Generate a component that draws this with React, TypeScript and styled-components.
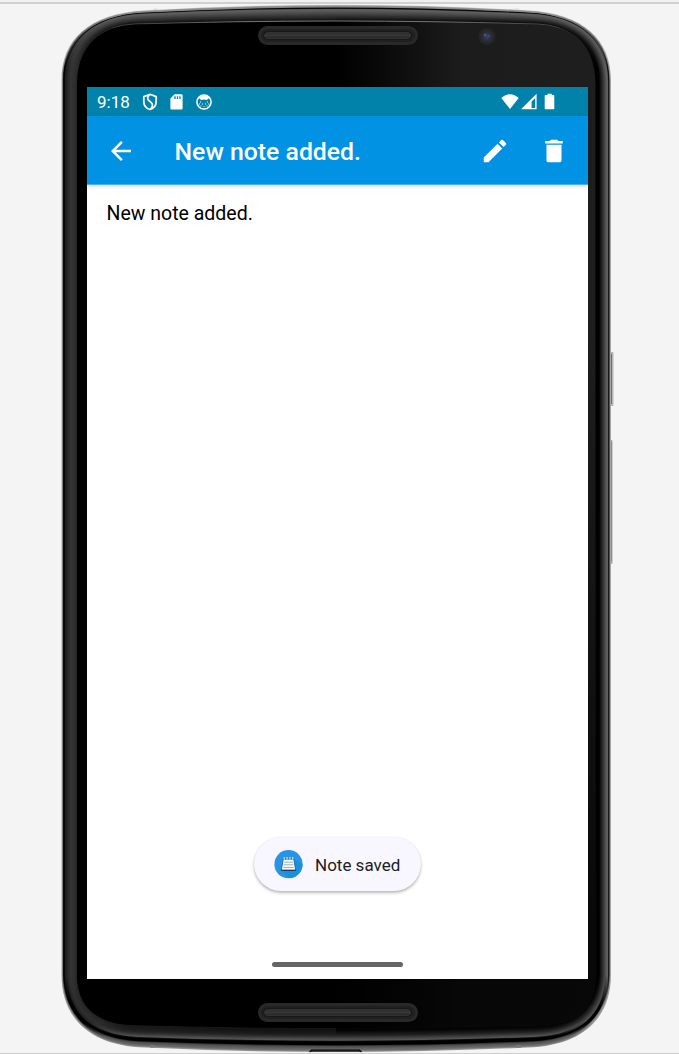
import React from "react";
import styled, { createGlobalStyle } from "styled-components";

const GlobalStyle = createGlobalStyle`
  *, *::before, *::after { box-sizing: border-box; }
  body { margin: 0; font-family: Roboto, "Liberation Sans", sans-serif; }
`;

const Page = styled.main`
  display: grid;
  grid-template: 1054px / 679px;
  overflow: hidden;
`;

const Backdrop = styled.div`
  grid-area: 1 / 1;
  background: #f4f4f4;
  border-bottom: 1px solid #cfcfcf;
`;

const TopRule = styled.div`
  height: 4px;
  background: linear-gradient(#f1f1f1 2px, #d0d0d0 2px);
`;

const FrameArt = styled.svg`
  grid-area: 1 / 1;
  display: block;
`;

const Screen = styled.section`
  grid-area: 1 / 1;
  display: flex;
  flex-direction: column;
  width: 501px;
  height: 892px;
  margin: 87px 0 0 87px;
  background: #fff;
  z-index: 1;
`;

const StatusBar = styled.div`
  display: flex;
  justify-content: space-between;
  height: 29px;
  padding: 0 33px 0 10px;
  background: #0082ab;
  color: #fff;
`;

const StatusGroup = styled.div<{ $gap: number }>`
  display: flex;
  align-items: center;
  gap: ${(p) => p.$gap}px;
`;

const Clock = styled.span`
  width: 32px;
  font-size: 17px;
  line-height: 29px;
  padding-top: 1px;
  white-space: nowrap;
`;

const AppBar = styled.header`
  display: flex;
  align-items: center;
  height: 69px;
  padding: 1px 19px 0 19px;
  background: #0292e3;
  border-bottom: 1px solid #4fb0e6;
  color: #fff;
  box-shadow: 0 1px 4px rgba(0, 0, 0, 0.18);
`;

const Title = styled.h1`
  flex: 1;
  margin: 2px 0 0 38.5px;
  font-size: 24.8px;
  font-weight: 500;
  line-height: 32px;
  white-space: nowrap;
`;

const IconButton = styled.button<{ $end?: number }>`
  display: flex;
  padding: 0;
  margin: 0 ${(p) => p.$end ?? 0}px 0 0;
  border: 0;
  background: none;
  color: inherit;
  svg { display: block; width: 30px; height: 30px; fill: currentColor; }
`;

const NoteBody = styled.p`
  flex: 1;
  margin: 0;
  padding: 16px 19.5px;
  color: #000;
  font-size: 19.5px;
  line-height: 26px;
`;

const Toast = styled.div`
  display: flex;
  align-items: center;
  align-self: center;
  gap: 12px;
  width: 167px;
  height: 54px;
  padding-left: 20px;
  margin-bottom: 71px;
  border-radius: 27px;
  background: #f8f7ff;
  color: #1b1b22;
  font-size: 17px;
  white-space: nowrap;
  box-shadow: 0 2px 3px rgba(0, 0, 0, 0.26), 0 0 2px rgba(0, 0, 0, 0.08);
`;

const ToastText = styled.span`
  padding-top: 2px;
`;

const GestureBar = styled.div`
  align-self: center;
  width: 131px;
  height: 5px;
  margin-bottom: 12px;
  border-radius: 3px;
  background: #666;
`;

type Rgb = [number, number, number];
type Stop = [number, number];

const shade = (stops: Stop[], t: number): string => {
  let v = stops[stops.length - 1][1];
  for (let i = 1; i < stops.length; i++) {
    if (t <= stops[i][0]) {
      const [a, x] = stops[i - 1];
      const [b, y] = stops[i];
      v = x + ((y - x) * (t - a)) / (b - a || 1);
      break;
    }
  }
  const c: Rgb = [v, v, v];
  return `rgb(${c.map((n) => Math.round(n)).join(",")})`;
};

const LEFT: Stop[] = [[0, 165], [0.07, 120], [0.1, 0], [0.17, 0], [0.22, 28], [0.55, 52], [0.85, 46], [1, 34]];
const RIGHT: Stop[] = [[0, 175], [0.08, 130], [0.1, 0], [0.14, 5], [0.2, 105], [0.35, 78], [0.65, 22], [0.75, 0], [1, 0]];
const TOP: Stop[] = [[0, 235], [0.05, 150], [0.16, 130], [0.19, 0], [0.23, 5], [0.26, 100], [0.5, 75], [0.75, 42], [0.95, 12], [1, 95]];
const BOTTOM: Stop[] = [[0, 150], [0.06, 110], [0.24, 70], [0.27, 0], [0.43, 0], [0.47, 88], [0.7, 30], [0.9, 0], [1, 0]];
const LOWER_LEFT: Stop[] = [[0, 165], [0.1, 100], [0.15, 0], [0.36, 0], [0.4, 32], [0.6, 46], [0.85, 40], [1, 30]];
const LOWER_RIGHT: Stop[] = [[0, 165], [0.14, 120], [0.17, 0], [0.34, 0], [0.38, 82], [0.6, 48], [0.85, 8], [1, 4]];

const outline = (t: number): string => {
  const m = (a: number, b: number) => (a + (b - a) * t).toFixed(2);
  const r = (a: number, b: number) => (672.5 - (a + (b - a) * t)).toFixed(2);
  return [
    `M${m(61.5, 77)} ${m(80, 85)}`,
    `C${m(61.5, 77)} ${m(40, 45)} ${m(88, 100)} ${m(13, 26)} ${m(145, 135)} ${m(10, 24)}`,
    `Q${m(240, 240)} ${m(4.5, 21)} 336.25 ${m(4.5, 21)}`,
    `Q${r(240, 240)} ${m(4.5, 21)} ${r(145, 135)} ${m(10, 24)}`,
    `C${r(88, 100)} ${m(13, 26)} ${r(61.5, 77)} ${m(40, 45)} ${r(61.5, 77)} ${m(80, 85)}`,
    `V${m(975, 975)}`,
    `C${r(61.5, 77)} ${m(1018, 1005)} ${r(90, 95)} ${m(1046, 1023)} ${r(145, 130)} ${m(1047.5, 1025)}`,
    `Q${r(240, 240)} ${m(1052, 1028)} 336.25 ${m(1052, 1028)}`,
    `Q${m(240, 240)} ${m(1052, 1028)} ${m(145, 130)} ${m(1047.5, 1025)}`,
    `C${m(90, 95)} ${m(1046, 1023)} ${m(61.5, 77)} ${m(1018, 1005)} ${m(61.5, 77)} ${m(975, 975)}Z`,
  ].join("");
};

const RINGS = Array.from({ length: 33 }, (_, i) => i / 32);

const Speaker = ({ y }: { y: number }) => (
  <g>
    <rect x="258" y={y} width="160" height="19" rx="9.5" fill="#292929" />
    <rect x="261" y={y + 3} width="154" height="13" rx="6.5" fill="#202020" />
    <rect x="263.5" y={y + 5.5} width="148" height="8" rx="4" fill="#111" />
    <rect x="264.5" y={y + 6.5} width="146" height="6" rx="3" fill="url(#speaker)" stroke="#383838" strokeWidth="0.8" />
  </g>
);

const PhoneFrame = () => (
  <FrameArt width="679" height="1054" viewBox="0 0 679 1054" aria-hidden="true">
    <defs>
      {RINGS.map((t, i) =>
        [
          [LEFT, LOWER_LEFT],
          [RIGHT, LOWER_RIGHT],
        ].map(([side, lower], s) => (
          <linearGradient key={`${i}-${s}`} id={`ring${i}-${s}`} gradientUnits="userSpaceOnUse" x1="0" x2="0" y1="0" y2="1054">
            <stop offset="0.014" stopColor={shade(TOP, t)} />
            <stop offset="0.065" stopColor={shade(side, t)} />
            <stop offset="0.925" stopColor={shade(side, t)} />
            <stop offset="0.955" stopColor={shade(lower, t)} />
            <stop offset="0.97" stopColor={shade(lower, t)} />
            <stop offset="0.984" stopColor={shade(BOTTOM, t)} />
          </linearGradient>
        ))
      )}
      <clipPath id="half0"><rect width="336" height="1054" /></clipPath>
      <clipPath id="half1"><rect x="336" width="343" height="1054" /></clipPath>
      <linearGradient id="glass" gradientUnits="userSpaceOnUse" x1="77" x2="596" y1="0" y2="0">
        <stop offset="0.5" stopColor="#000" />
        <stop offset="0.62" stopColor="#0d0d0d" />
        <stop offset="0.74" stopColor="#1c1c1c" />
        <stop offset="1" stopColor="#1e1e1e" />
      </linearGradient>
      <linearGradient id="glassFade" x1="0" x2="0" y1="0" y2="1">
        <stop offset="0.3" stopColor="#000" stopOpacity="0" />
        <stop offset="0.92" stopColor="#000" stopOpacity="0.75" />
      </linearGradient>
      <linearGradient id="speaker" x1="0" x2="0" y1="0" y2="1">
        <stop stopColor="#2c2c2c" />
        <stop offset="0.5" stopColor="#363636" />
        <stop offset="1" stopColor="#242424" />
      </linearGradient>
      <linearGradient id="rim" gradientUnits="userSpaceOnUse" x1="110" x2="562" y1="0" y2="0">
        <stop stopColor="#777" stopOpacity="0.3" />
        <stop offset="0.3" stopColor="#888" />
        <stop offset="0.7" stopColor="#888" />
        <stop offset="1" stopColor="#777" stopOpacity="0.3" />
      </linearGradient>
      <radialGradient id="lens">
        <stop stopColor="#3d4466" />
        <stop offset="0.4" stopColor="#2d3149" />
        <stop offset="0.7" stopColor="#28282b" />
        <stop offset="1" stopColor="#232323" />
      </radialGradient>
    </defs>
    <rect x="610" y="352" width="3.5" height="54" rx="1" fill="#b5b5b5" />
    <rect x="610" y="354" width="2" height="50" fill="#716d6c" />
    <rect x="610" y="440" width="2.5" height="124" rx="1" fill="#aaa6a4" />
    <rect x="610" y="442" width="1.5" height="119" fill="#77716e" />
    {[0, 1].map((s) => (
      <g key={s} clipPath={`url(#half${s})`}>
        {RINGS.map((t, i) => (
          <path key={i} d={outline(t)} fill={`url(#ring${i}-${s})`} />
        ))}
      </g>
    ))}
    <path d={outline(1)} fill="url(#glass)" />
    <path d={outline(1)} fill="url(#glassFade)" />
    <path d="M112 28Q122 24.5 135 24Q240 21 336 21T537.5 24Q550 24.5 560 28" fill="none" stroke="url(#rim)" strokeWidth="0.8" />
    <path d="M153 9.3h5M514 9.3h5" stroke="#ddd" strokeWidth="1.6" />
    <path d="M150 1046.3h5M516 1046.3h5" stroke="#777" strokeWidth="2.4" />
    <path d="M309.5 1052l2-1.8h48l2 1.8" fill="#444" stroke="#080808" strokeWidth="1.2" />
    <Speaker y={26} />
    <Speaker y={1003} />
    <circle cx="487" cy="36.5" r="8.5" fill="url(#lens)" />
    <circle cx="485" cy="34.8" r="1.1" fill="#56618a" />
    <circle cx="489" cy="36" r="0.8" fill="#4b5682" />
  </FrameArt>
);

const ShieldIcon = () => (
  <svg width="16" height="18" viewBox="0 0 16 18" fill="none" stroke="#fff" strokeWidth="1.7">
    <path d="M8 1.3L14.2 3.6V8.4C14.2 12.2 11.6 15.3 8 16.5C4.4 15.3 1.8 12.2 1.8 8.4V3.6Z" />
    <path d="M8 1.5C5.2 3.3 4.8 5.7 7.2 7.8L9.3 9.7C11.2 11.6 10.8 14.2 8.2 16.2" />
  </svg>
);

const SdIcon = () => (
  <svg width="13" height="16" viewBox="0 0 13 16">
    <path d="M4.5 .3H11.4Q12.6.3 12.6 1.4V14.5Q12.6 15.6 11.4 15.6H1.5Q.4 15.6.4 14.5V4.6Z" fill="#fff" />
    <path d="M5 2.2V5M7.5 2.2V5M10 2.2V5" stroke="#0082ab" strokeWidth="1.3" />
  </svg>
);

const FaceIcon = () => (
  <svg width="16" height="16" viewBox="0 0 16 16">
    <circle cx="8" cy="8" r="7.1" fill="none" stroke="#fff" strokeWidth="1.5" />
    <path d="M1.2 7Q2 1 8 1T14.8 7L12.9 4.2L10.8 6Q8 5.2 5.2 6L3.1 4.2Z" fill="#fff" />
    <path d="M4 8h1M11 8h1M6 10h1M9.2 10h1M4.5 12h1M10.5 12h1M7.6 12.6h1M3 10h1M12.2 10h1" stroke="#fff" strokeWidth="1" />
  </svg>
);

const SignalIcons = () => (
  <svg width="54" height="17" viewBox="0 0 54 17" fill="#fff">
    <path d="M9 16L.3 5.1Q4.1 1.3 9 1.3T17.7 5.1Z" />
    <path fillRule="evenodd" d="M20 16.2L35.6 .8V16.2ZM30.6 15H34.2V5L30.6 8.6Z" />
    <path d="M46.5.8h4.2v1.3h2q.6 0 .6.6v12.9q0 .6-.6.6h-8.4q-.6 0-.6-.6V2.7q0-.6.6-.6h2.2Z" />
  </svg>
);

const NotepadLogo = () => (
  <svg width="29" height="29" viewBox="0 0 29 29">
    <circle cx="14.5" cy="14.2" r="14.1" fill="#2994e6" />
    <path d="M7.8 20.5L15.5 28.2A14 14 0 0 0 28.5 14L20 9.5V20.5Z" fill="#1991dc" />
    <path d="M9.2 9.2H19.8L21.8 20.5H7.2Z" fill="#f7f8fa" stroke="#1c6591" strokeWidth="0.9" />
    <path d="M7.3 20.3H21.7" stroke="#123f5b" strokeWidth="1.3" />
    <path d="M10 12.2H19M9.7 14.8H19.3M9.4 17.5H19.6" stroke="#9aa9b3" strokeWidth="0.9" />
    <path d="M10.3 7V9.8M13.1 7V9.8M15.9 7V9.8M18.7 7V9.8" stroke="#a4edff" strokeWidth="1.2" />
  </svg>
);

const MaterialIcon = ({ d }: { d: string }) => (
  <svg viewBox="0 0 24 24" aria-hidden="true"><path d={d} /></svg>
);

export default function App() {
  return (
    <>
      <GlobalStyle />
      <Page>
        <Backdrop><TopRule /></Backdrop>
        <PhoneFrame />
        <Screen>
          <StatusBar>
            <StatusGroup $gap={12.5}>
              <Clock>9:18</Clock>
              <ShieldIcon />
              <SdIcon />
              <FaceIcon />
            </StatusGroup>
            <StatusGroup $gap={0}>
              <SignalIcons />
            </StatusGroup>
          </StatusBar>
          <AppBar>
            <IconButton aria-label="Back">
              <MaterialIcon d="M20 11H7.83l5.59-5.59L12 4l-8 8 8 8 1.41-1.41L7.83 13H20v-2z" />
            </IconButton>
            <Title>New note added.</Title>
            <IconButton aria-label="Edit" $end={29}>
              <MaterialIcon d="M3 17.25V21h3.75L17.81 9.94l-3.75-3.75L3 17.25zM20.71 7.04c.39-.39.39-1.02 0-1.41l-2.34-2.34a.9959.9959 0 0 0-1.41 0l-1.83 1.83 3.75 3.75 1.83-1.83z" />
            </IconButton>
            <IconButton aria-label="Delete">
              <MaterialIcon d="M6 19.6c0 .8.6 1.4 1.4 1.4h9.2c.8 0 1.4-.6 1.4-1.4V7H6v12.6zM19 4h-3.5l-1-1h-5l-1 1H5v2h14V4z" />
            </IconButton>
          </AppBar>
          <NoteBody>New note added.</NoteBody>
          <Toast role="status">
            <NotepadLogo />
            <ToastText>Note saved</ToastText>
          </Toast>
          <GestureBar />
        </Screen>
      </Page>
    </>
  );
}
